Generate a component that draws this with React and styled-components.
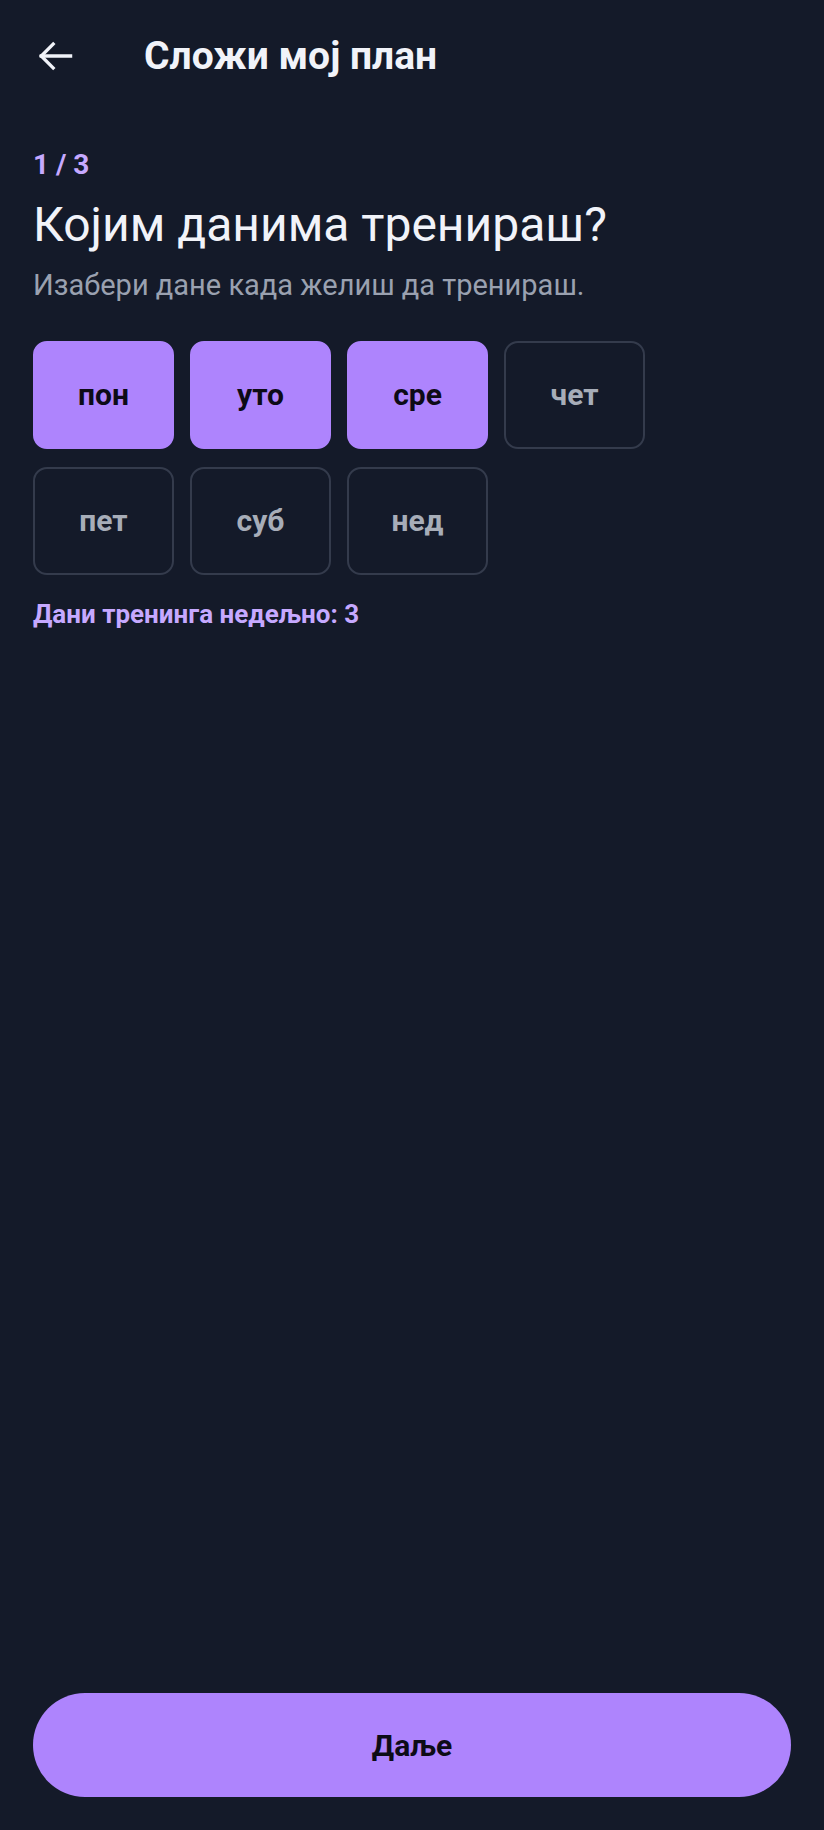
import React, {useState} from 'react'
import styled, {createGlobalStyle} from 'styled-components'

const GlobalStyle = createGlobalStyle`
  html, body {
    margin: 0;
    padding: 0;
    background: #141a29;
  }
  * {
    box-sizing: border-box;
  }
`

const Page = styled.div`
  min-height: 1830px;
  display: flex;
  flex-direction: column;
  background: #141a29;
  font-family: Roboto, "Noto Sans", sans-serif;
  color: #f1f3f9;
`

const Header = styled.header`
  height: 112px;
  display: flex;
  align-items: center;
  padding: 0 33px 0 33px;
`

const BackButton = styled.button`
  width: 46px;
  height: 46px;
  padding: 0;
  border: none;
  background: transparent;
  color: #f1f3f9;
  display: flex;
  align-items: center;
  justify-content: flex-start;
  cursor: pointer;
  margin-right: 65px;
`

const HeaderTitle = styled.h1`
  margin: 0;
  font-size: 39px;
  font-weight: 700;
  letter-spacing: 0;
`

const Content = styled.main`
  padding: 36px 33px 0 33px;
  display: flex;
  flex-direction: column;
`

const Step = styled.div`
  font-size: 28px;
  font-weight: 700;
  color: #c6a9ff;
`

const Question = styled.h2`
  margin: 15px 0 0 0;
  font-size: 48px;
  font-weight: 400;
  line-height: 1.2;
`

const Hint = styled.p`
  margin: 14px 0 0 0;
  font-size: 29px;
  color: #9aa1b0;
`

const Days = styled.div`
  margin-top: 39px;
  display: flex;
  flex-wrap: wrap;
  gap: 18px 16px;
  max-width: 640px;
`

const Day = styled.button`
  width: 141px;
  height: 108px;
  border-radius: 14px;
  font-family: inherit;
  font-size: 30px;
  font-weight: 700;
  cursor: pointer;
  border: 2px solid ${props => props.selected ? '#ae84fd' : '#343b4c'};
  background: ${props => props.selected ? '#ae84fd' : 'transparent'};
  color: ${props => props.selected ? '#0d0b16' : '#a7adb8'};
`

const Count = styled.div`
  margin-top: 24px;
  font-size: 26px;
  font-weight: 700;
  color: #c6a9ff;
`

const Footer = styled.footer`
  margin-top: auto;
  padding: 0 33px 33px 33px;
`

const NextButton = styled.button`
  width: 100%;
  height: 104px;
  border: none;
  border-radius: 52px;
  background: #ae84fd;
  color: #0d0b16;
  font-family: inherit;
  font-size: 30px;
  font-weight: 700;
  cursor: pointer;
`

const days = ['пон', 'уто', 'сре', 'чет', 'пет', 'суб', 'нед']

const App = () => {
    const [selected, setSelected] = useState(['пон', 'уто', 'сре'])

    const toggle = (day) => {
        setSelected(selected.includes(day) ? selected.filter(d => d !== day) : [...selected, day])
    }

    return (
        <Page>
            <GlobalStyle/>
            <Header>
                <BackButton title="Назад">
                    <svg width="44" height="44" viewBox="0 0 24 24" fill="none" stroke="currentColor"
                         strokeWidth="1.8" strokeLinecap="square">
                        <path d="M20.5 12H4.5"/>
                        <path d="M11 5.5L4.5 12l6.5 6.5"/>
                    </svg>
                </BackButton>
                <HeaderTitle>Сложи мој план</HeaderTitle>
            </Header>

            <Content>
                <Step>1 / 3</Step>
                <Question>Којим данима тренираш?</Question>
                <Hint>Изабери дане када желиш да тренираш.</Hint>
                <Days>
                    {days.map(day =>
                        <Day key={day} selected={selected.includes(day)} onClick={() => toggle(day)}>
                            {day}
                        </Day>
                    )}
                </Days>
                <Count>Дани тренинга недељно: {selected.length}</Count>
            </Content>

            <Footer>
                <NextButton>Даље</NextButton>
            </Footer>
        </Page>
    )
}

export default App
